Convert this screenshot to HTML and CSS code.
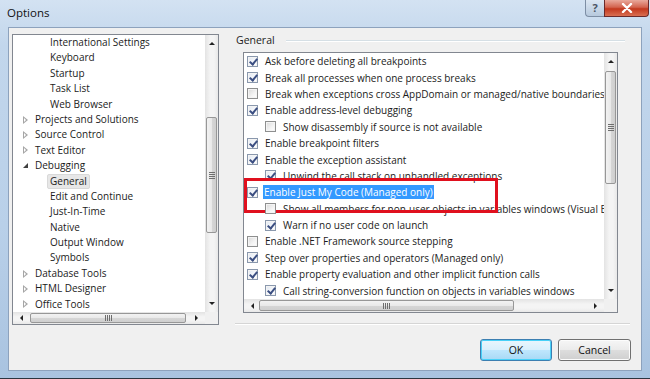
FILE: index.html
```html
<!DOCTYPE html>
<html lang="en">
<head>
    <meta charset="UTF-8">
    <title>Options</title>
    <link rel="stylesheet" href="styles.css">
</head>
<body>
    <div class="window">
        <div class="titlebar">
            <span class="title">Options</span>
            <div class="caption">
                <span class="cap-help">?</span>
                <span class="cap-close">
                    <svg width="14" height="10" viewBox="0 0 14 10"><path d="M3 1 L11 9 M11 1 L3 9" stroke="#fff" stroke-width="2.4" stroke-linecap="round"/></svg>
                </span>
            </div>
        </div>

        <div class="client">
            <div class="main">
                <!-- category tree -->
                <div class="box tree">
                    <div class="tree-items">
                        <div class="node lvl2">International Settings</div>
                        <div class="node lvl2">Keyboard</div>
                        <div class="node lvl2">Startup</div>
                        <div class="node lvl2">Task List</div>
                        <div class="node lvl2">Web Browser</div>
                        <div class="node"><span class="twisty closed"></span>Projects and Solutions</div>
                        <div class="node"><span class="twisty closed"></span>Source Control</div>
                        <div class="node"><span class="twisty closed"></span>Text Editor</div>
                        <div class="node"><span class="twisty open"></span>Debugging</div>
                        <div class="node lvl2"><span class="inactive-sel">General</span></div>
                        <div class="node lvl2">Edit and Continue</div>
                        <div class="node lvl2">Just-In-Time</div>
                        <div class="node lvl2">Native</div>
                        <div class="node lvl2">Output Window</div>
                        <div class="node lvl2">Symbols</div>
                        <div class="node"><span class="twisty closed"></span>Database Tools</div>
                        <div class="node"><span class="twisty closed"></span>HTML Designer</div>
                        <div class="node"><span class="twisty closed"></span>Office Tools</div>
                    </div>
                    <div class="vscroll">
                        <span class="sb-btn"><span class="arr up"></span></span>
                        <span class="thumb-v tree-thumb"><span class="grip-v"></span></span>
                        <span class="sb-fill"></span>
                        <span class="sb-btn"><span class="arr down"></span></span>
                    </div>
                    <div class="hscroll">
                        <span class="sb-btn"><span class="arr left"></span></span>
                        <span class="thumb-h tree-hthumb"><span class="grip-h"></span></span>
                        <span class="sb-fill"></span>
                        <span class="sb-btn"><span class="arr right"></span></span>
                    </div>
                    <div class="corner"></div>
                </div>

                <div class="panel">
                    <div class="group-head">
                        <span>General</span>
                        <span class="group-line"></span>
                    </div>

                    <div class="box options">
                        <div class="option-rows">
                            <div class="opt"><span class="cb on"></span>Ask before deleting all breakpoints</div>
                            <div class="opt"><span class="cb on"></span>Break all processes when one process breaks</div>
                            <div class="opt"><span class="cb"></span>Break when exceptions cross AppDomain or managed/native boundaries (Managed only)</div>
                            <div class="opt"><span class="cb on"></span>Enable address-level debugging</div>
                            <div class="opt sub"><span class="cb"></span>Show disassembly if source is not available</div>
                            <div class="opt"><span class="cb on"></span>Enable breakpoint filters</div>
                            <div class="opt"><span class="cb on"></span>Enable the exception assistant</div>
                            <div class="opt sub"><span class="cb on"></span>Unwind the call stack on unhandled exceptions</div>
                            <div class="opt marked"><span class="cb on"></span><span class="selected">Enable Just My Code (Managed only)</span><span class="red-mark"></span></div>
                            <div class="opt sub"><span class="cb"></span>Show all members for non-user objects in variables windows (Visual Basic only)</div>
                            <div class="opt sub"><span class="cb on"></span>Warn if no user code on launch</div>
                            <div class="opt"><span class="cb"></span>Enable .NET Framework source stepping</div>
                            <div class="opt"><span class="cb on"></span>Step over properties and operators (Managed only)</div>
                            <div class="opt"><span class="cb on"></span>Enable property evaluation and other implicit function calls</div>
                            <div class="opt sub"><span class="cb on"></span>Call string-conversion function on objects in variables windows</div>
                        </div>
                        <div class="vscroll">
                            <span class="sb-btn"><span class="arr up"></span></span>
                            <span class="thumb-v opt-thumb"><span class="grip-v"></span></span>
                            <span class="sb-fill"></span>
                            <span class="sb-btn"><span class="arr down"></span></span>
                        </div>
                        <div class="hscroll">
                            <span class="sb-btn"><span class="arr left"></span></span>
                            <span class="thumb-h opt-hthumb"><span class="grip-h"></span></span>
                            <span class="sb-fill"></span>
                            <span class="sb-btn"><span class="arr right"></span></span>
                        </div>
                        <div class="corner"></div>
                    </div>

                    <div class="separator"></div>
                </div>
            </div>

            <div class="buttons">
                <button class="btn default">OK</button>
                <button class="btn">Cancel</button>
            </div>
        </div>
    </div>
</body>
</html>
```

FILE: styles.css
```css
* {
    margin: 0;
    padding: 0;
    box-sizing: border-box;
}
body {
    font-family: "Open Sans", "Noto Sans", sans-serif;
    font-size: 10px;
    color: #1b1b1b;
    background: #2a3a4a;
    width: 650px;
    height: 379px;
    overflow: hidden;
}
.window {
    width: 650px;
    height: 379px;
    background: linear-gradient(180deg, #d3e2f2 0%, #c2d6ec 12%, #b9d0e9 60%, #a9c3e0 100%);
    padding: 0 8px 7px 8px;
    display: flex;
    flex-direction: column;
    border-bottom: 1px solid #2c3540;
}
.titlebar {
    height: 27px;
    display: flex;
    align-items: flex-start;
    justify-content: space-between;
}
.title {
    font-size: 11.5px;
    color: #111;
    margin-top: 5px;
    margin-left: -1px;
}
.caption {
    display: flex;
    margin-right: -7px;
}
.cap-help {
    width: 19px;
    height: 17px;
    border: 1px solid #7d8ea4;
    border-top: none;
    border-right: none;
    border-radius: 0 0 0 4px;
    background: linear-gradient(180deg, #dbe6f2, #b7c9dd);
    color: #4b5563;
    font-size: 11px;
    font-weight: bold;
    text-align: center;
    line-height: 15px;
}
.cap-close {
    width: 45px;
    height: 17px;
    border: 1px solid #6b2a2a;
    border-top: none;
    border-radius: 0 0 4px 0;
    background: linear-gradient(180deg, #e9a99c 0%, #d3644f 45%, #c3381e 55%, #d96f52 100%);
    display: flex;
    align-items: center;
    justify-content: center;
}
.client {
    flex: 1;
    background: #f0f0f0;
    border: 1px solid #8da2bd;
    padding: 6px 10px 0 3px;
    display: flex;
    flex-direction: column;
}
.main {
    display: flex;
    height: 291px;
}
.box {
    background: #fff;
    border: 1px solid #828790;
    display: grid;
}
.tree {
    width: 207px;
    grid-template-columns: 192px 13px;
    grid-template-rows: 277px 12px;
}
.tree-items {
    overflow: hidden;
}
.node {
    height: 15.4px;
    line-height: 15.4px;
    white-space: nowrap;
    padding-left: 9px;
    display: flex;
    align-items: center;
}
.node.lvl2 {
    padding-left: 37px;
}
.twisty {
    width: 13px;
    height: 8px;
    position: relative;
    flex: none;
}
.twisty.closed::before {
    content: "";
    position: absolute;
    left: 1px;
    top: 0;
    border-left: 5px solid #a6a6a6;
    border-top: 4px solid transparent;
    border-bottom: 4px solid transparent;
}
.twisty.closed::after {
    content: "";
    position: absolute;
    left: 2px;
    top: 2px;
    border-left: 2.5px solid #fff;
    border-top: 2px solid transparent;
    border-bottom: 2px solid transparent;
}
.twisty.open::before {
    content: "";
    position: absolute;
    left: 1px;
    top: 1px;
    border-right: 5px solid #404040;
    border-top: 5px solid transparent;
}
.inactive-sel {
    background: #e7e7e7;
    border: 1px solid #d9d9d9;
    border-radius: 2px;
    padding: 0 2px;
    margin-left: -3px;
    line-height: 13px;
}

/* scrollbars */
.vscroll {
    background: linear-gradient(90deg, #e3e3e3, #f4f4f4 40%, #f4f4f4 70%, #e8e8e8);
    display: flex;
    flex-direction: column;
}
.hscroll {
    background: linear-gradient(180deg, #e3e3e3, #f4f4f4 40%, #f4f4f4 70%, #e8e8e8);
    display: flex;
}
.corner {
    background: #f0f0f0;
}
.sb-btn {
    flex: none;
    width: 13px;
    height: 17px;
    display: flex;
    align-items: center;
    justify-content: center;
}
.hscroll .sb-btn {
    width: 17px;
    height: auto;
}
.sb-fill {
    flex: 1;
}
.arr {
    width: 0;
    height: 0;
}
.arr.up {
    border-bottom: 3px solid #222;
    border-left: 3px solid transparent;
    border-right: 3px solid transparent;
}
.arr.down {
    border-top: 3px solid #222;
    border-left: 3px solid transparent;
    border-right: 3px solid transparent;
}
.arr.left {
    border-right: 3px solid #222;
    border-top: 3px solid transparent;
    border-bottom: 3px solid transparent;
}
.arr.right {
    border-left: 3px solid #222;
    border-top: 3px solid transparent;
    border-bottom: 3px solid transparent;
}
.thumb-v {
    flex: none;
    margin: 0 1px;
    border: 1px solid #979797;
    border-radius: 2px;
    background: linear-gradient(90deg, #f2f2f2, #e9e9e9 50%, #d6d6d6 51%, #cfcfcf);
    display: flex;
    align-items: center;
    justify-content: center;
}
.thumb-h {
    flex: none;
    margin: 1px 0;
    border: 1px solid #979797;
    border-radius: 2px;
    background: linear-gradient(180deg, #f2f2f2, #e9e9e9 50%, #d6d6d6 51%, #cfcfcf);
    display: flex;
    align-items: center;
    justify-content: center;
}
.grip-v {
    width: 6px;
    height: 7px;
    background: repeating-linear-gradient(180deg, #6e6e6e 0 1px, transparent 1px 2px);
}
.grip-h {
    width: 7px;
    height: 6px;
    background: repeating-linear-gradient(90deg, #6e6e6e 0 1px, transparent 1px 2px);
}
.tree-thumb {
    margin-top: 65px;
    height: 116px;
}
.tree-hthumb {
    width: 156px;
}
.opt-thumb {
    margin-top: 1px;
    height: 113px;
}
.opt-hthumb {
    margin-left: -2px;
    width: 255px;
}

/* right panel */
.panel {
    width: 395px;
    margin-left: 16px;
    display: flex;
    flex-direction: column;
}
.group-head {
    height: 12px;
    display: flex;
    align-items: center;
    padding-left: 1px;
    font-size: 10.5px;
}
.group-line {
    flex: 1;
    height: 2px;
    border-top: 1px solid #d5dfe5;
    border-bottom: 1px solid #fff;
    margin: 1px 5px 0 11px;
}
.options {
    width: 375px;
    height: 261px;
    margin: 6px 0 0 8px;
    grid-template-columns: 360px 13px;
    grid-template-rows: 246px 13px;
}
.option-rows {
    overflow: hidden;
}
.opt {
    height: 16.4px;
    display: flex;
    align-items: center;
    white-space: nowrap;
    padding-left: 3px;
}
.opt.sub {
    padding-left: 21px;
}
.opt.marked {
    position: relative;
}
.cb {
    flex: none;
    width: 11px;
    height: 11px;
    margin-right: 7px;
    border: 1px solid #8e8f8f;
    background: linear-gradient(135deg, #d8d8d8, #f4f4f4 60%, #fff);
    box-shadow: inset 0 0 0 1px #f4f4f4;
    position: relative;
}
.cb.on {
    border-color: #8a98ad;
    background: linear-gradient(135deg, #dfe6f0, #f7f9fc 60%, #fff);
}
.cb.on::after {
    content: "";
    position: absolute;
    left: 2.5px;
    top: 0;
    width: 3px;
    height: 6px;
    border-right: 2px solid #3c4f82;
    border-bottom: 2px solid #3c4f82;
    transform: rotate(40deg);
}
.selected {
    background: #3399ff;
    color: #fff;
    line-height: 14px;
    padding: 0 1px;
    margin-left: -2px;
}
.red-mark {
    position: absolute;
    left: 0;
    top: -6px;
    width: 254px;
    height: 35px;
    border: 3px solid #e0101e;
}
.separator {
    margin-top: 10px;
    height: 2px;
    border-top: 1px solid #d5d5d5;
    border-bottom: 1px solid #fff;
}

/* dialog buttons */
.buttons {
    margin-top: 14px;
    display: flex;
    justify-content: flex-end;
    gap: 6px;
}
.btn {
    width: 73px;
    height: 22px;
    font-family: "Open Sans", "Noto Sans", sans-serif;
    font-size: 10.5px;
    color: #111;
    border: 1px solid #707070;
    border-radius: 3px;
    background: linear-gradient(180deg, #f6f6f6 0%, #ebebeb 48%, #dddddd 52%, #cfcfcf 100%);
    box-shadow: inset 0 0 0 1px #fcfcfc;
}
.btn.default {
    width: 72px;
    border-color: #3c7fb1;
    background: linear-gradient(180deg, #eaf6fd 0%, #d9f0fc 48%, #bee6fd 52%, #a7d9f5 100%);
    box-shadow: inset 0 0 0 1px #48d1f8;
}
```
